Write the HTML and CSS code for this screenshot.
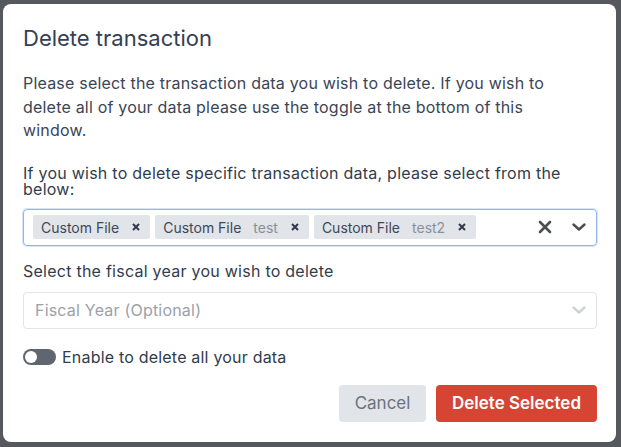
FILE: index.html
```html
<!DOCTYPE html>
<html lang="en">
<head>
    <meta charset="UTF-8">
    <meta name="viewport" content="width=device-width, initial-scale=1.0">
    <title>Delete transaction</title>
    <link rel="stylesheet" href="styles.css">
</head>
<body>
    <div class="modal">
        <h2 class="modal-title">Delete transaction</h2>
        <p class="intro">Please select the transaction data you wish to delete. If you wish to delete all of your data please use the toggle at the bottom of this window.</p>

        <label class="field-label">If you wish to delete specific transaction data, please select from the below:</label>
        <div class="select focused">
            <div class="chips">
                <span class="chip">Custom File <svg class="chip-x" width="8" height="8" viewBox="0 0 8 8"><path d="M1 1 L7 7 M7 1 L1 7" stroke="#2f3a4a" stroke-width="2"/></svg></span>
                <span class="chip">Custom File <span class="chip-sub">test</span> <svg class="chip-x" width="8" height="8" viewBox="0 0 8 8"><path d="M1 1 L7 7 M7 1 L1 7" stroke="#2f3a4a" stroke-width="2"/></svg></span>
                <span class="chip">Custom File <span class="chip-sub">test2</span> <svg class="chip-x" width="8" height="8" viewBox="0 0 8 8"><path d="M1 1 L7 7 M7 1 L1 7" stroke="#2f3a4a" stroke-width="2"/></svg></span>
            </div>
            <div class="indicators">
                <svg class="clear" width="14" height="14" viewBox="0 0 14 14"><path d="M2 2 L12 12 M12 2 L2 12" stroke="#4a4f55" stroke-width="2.6" stroke-linecap="round"/></svg>
                <svg class="chev" width="16" height="16" viewBox="0 0 16 16"><path d="M2.5 5.5 L8 10.5 L13.5 5.5" fill="none" stroke="#4a4f55" stroke-width="2.4" stroke-linecap="round" stroke-linejoin="round"/></svg>
            </div>
        </div>

        <label class="field-label fiscal-label">Select the fiscal year you wish to delete</label>
        <div class="select">
            <span class="placeholder">Fiscal Year (Optional)</span>
            <div class="indicators">
                <svg class="chev" width="16" height="16" viewBox="0 0 16 16"><path d="M2.5 5.5 L8 10.5 L13.5 5.5" fill="none" stroke="#cfd2d6" stroke-width="2.4" stroke-linecap="round" stroke-linejoin="round"/></svg>
            </div>
        </div>

        <div class="toggle-row">
            <span class="toggle"><span class="knob"></span></span>
            <span>Enable to delete all your data</span>
        </div>

        <div class="actions">
            <button class="btn btn-cancel">Cancel</button>
            <button class="btn btn-danger">Delete Selected</button>
        </div>
    </div>
</body>
</html>
```

FILE: styles.css
```css
body {
    margin: 0;
    padding: 4px 5px 5px 3px;
    background: #55595e;
    font-family: Inter, "Open Sans", sans-serif;
    color: #3a4556;
}
.modal {
    background: #fff;
    border-radius: 8px;
    height: 438px;
    box-sizing: border-box;
    padding: 20px 19px 0 20px;
}
.modal-title {
    margin: 0 0 20px;
    font-size: 22px;
    line-height: 28px;
    font-weight: 400;
    color: #344054;
}
.intro {
    margin: 0 0 22px;
    max-width: 545px;
    font-size: 16px;
    line-height: 23.5px;
    letter-spacing: 0.2px;
}
.field-label {
    display: block;
    font-size: 16px;
    line-height: 16px;
    letter-spacing: 0.25px;
    color: #313c4d;
    margin-bottom: 12px;
}
.fiscal-label {
    margin-top: 17px;
    margin-bottom: 13px;
}
.select {
    display: flex;
    align-items: center;
    height: 37px;
    box-sizing: border-box;
    border: 1px solid #e2e4e7;
    border-radius: 4px;
    padding: 0 9px 0 11px;
}
.select.focused {
    border-color: #8fb6ec;
    box-shadow: 0 0 0 1px #d6e5f9;
    padding-left: 9px;
}
.chips {
    display: flex;
    gap: 5px;
    flex: 1;
}
.chip {
    display: flex;
    align-items: center;
    height: 24px;
    padding: 0 10px 0 8px;
    background: #e1e4e8;
    border-radius: 2px;
    font-size: 14px;
    color: #3d4858;
}
.chip-sub {
    color: #8a9099;
    margin-left: 12px;
}
.chip-x {
    margin-left: 13px;
}
.indicators {
    display: flex;
    align-items: center;
    gap: 19px;
}
.placeholder {
    flex: 1;
    font-size: 16px;
    letter-spacing: 0.2px;
    color: #9ca1a8;
}
.toggle-row {
    display: flex;
    align-items: center;
    gap: 6px;
    margin-top: 18px;
    font-size: 16px;
    line-height: 20px;
    letter-spacing: 0.2px;
    color: #313c4d;
}
.toggle {
    width: 33px;
    height: 16px;
    border-radius: 8px;
    background: #5f6670;
    position: relative;
}
.knob {
    position: absolute;
    left: 2px;
    top: 2px;
    width: 12px;
    height: 12px;
    border-radius: 50%;
    background: #fff;
}
.actions {
    display: flex;
    justify-content: flex-end;
    gap: 10px;
    margin-top: 18px;
}
.btn {
    height: 37px;
    border: none;
    border-radius: 4px;
    font-family: inherit;
    font-size: 17px;
    padding: 0 12px;
}
.btn-cancel {
    width: 87px;
    background: #e1e4e8;
    color: #6b727c;
}
.btn-danger {
    width: 161px;
    background: #d64434;
    color: #fff;
    font-weight: 600;
}
```
